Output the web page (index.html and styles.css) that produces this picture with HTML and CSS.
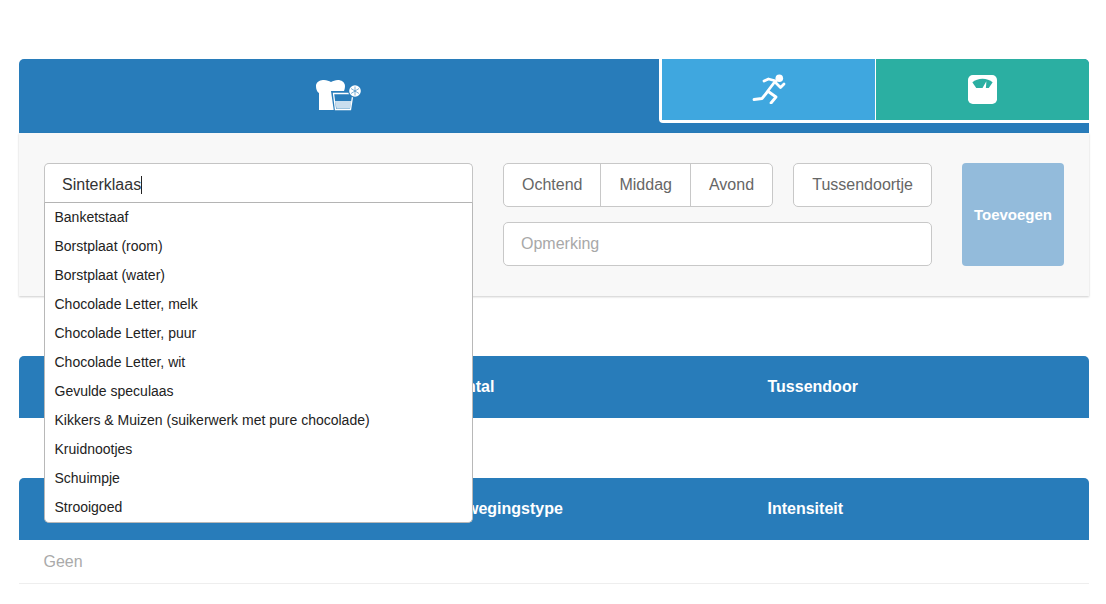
FILE: index.html
```html
<!DOCTYPE html>
<html lang="nl">
<head>
    <meta charset="UTF-8">
    <meta name="viewport" content="width=device-width, initial-scale=1.0">
    <title>Dagboek</title>
    <link rel="stylesheet" href="styles.css">
</head>
<body>

    <div class="page">

        <!-- Tabs -->
        <div class="tabs">
            <div class="tab tab-food">
                <svg width="46" height="33" viewBox="0 0 46 33">
                    <path fill="#fff" d="M3 31V14C0 12 0 8 0 6 1 2 5 1 8 1 11 1 13 2 15 3 17 2 19 1 22 1 25 1 29 3 29 7 29 10 28 12 27 14V31Z"/>
                    <path fill="#287cba" d="M15 12H39L36 33H18Z"/>
                    <path fill="none" stroke="#fff" stroke-width="1.3" d="M17.500 14.500H37L34.500 30.500H19.500Z"/>
                    <path fill="#fff" opacity=".75" d="M19 22H35.500L34 29.500H20.500Z"/>
                    <circle cx="39" cy="12" r="6.800" fill="#287cba"/>
                    <circle cx="39" cy="12" r="5.800" fill="#fff"/>
                    <path stroke="#287cba" stroke-width=".6" d="M39 7.500V16.500M35 9.500 43 14.500M43 9.500 35 14.500"/>
                </svg>
            </div>
            <div class="tab-group">
                <div class="tab tab-run">
                    <svg class="icon-run" width="36" height="32" viewBox="0 0 36 32">
                        <circle cx="28.300" cy="6.300" r="3.800" fill="#fff"/>
                        <g fill="none" stroke="#fff" stroke-width="2.800" stroke-linecap="round" stroke-linejoin="round">
                            <path d="M24 9.500 16 20"/>
                            <path d="M25 9 17.500 7 13 9"/>
                            <path d="M25 11 29.500 15.500 33 12"/>
                            <path d="M18 20 25 25 20 31"/>
                            <path d="M15.500 21 11 26.500 3 27.500"/>
                        </g>
                    </svg>
                </div>
                <div class="tab tab-weight">
                    <svg width="29" height="29" viewBox="0 0 30 30">
                        <rect width="30" height="30" rx="5" fill="#fff"/>
                        <path fill="#2bafa2" d="M4.500 7.500C10 2.500 20 2.500 25.500 7.500L21.500 13.500H8.500Z"/>
                        <path fill="#fff" d="M15 13.500 19 6.500 18.500 13.500Z"/>
                    </svg>
                </div>
            </div>
        </div>

        <!-- Invoer -->
        <div class="panel">
            <div class="search">
                <div class="search-input">Sinterklaas<span class="caret"></span></div>
                <ul class="suggestions">
                    <li>Banketstaaf</li>
                    <li>Borstplaat (room)</li>
                    <li>Borstplaat (water)</li>
                    <li>Chocolade Letter, melk</li>
                    <li>Chocolade Letter, puur</li>
                    <li>Chocolade Letter, wit</li>
                    <li>Gevulde speculaas</li>
                    <li>Kikkers &amp; Muizen (suikerwerk met pure chocolade)</li>
                    <li>Kruidnootjes</li>
                    <li>Schuimpje</li>
                    <li>Strooigoed</li>
                </ul>
            </div>
            <div class="fields">
                <div class="moments">
                    <div class="btn-group">
                        <button>Ochtend</button>
                        <button>Middag</button>
                        <button>Avond</button>
                    </div>
                    <button class="btn-single">Tussendoortje</button>
                </div>
                <input class="note" type="text" placeholder="Opmerking">
            </div>
            <button class="btn-add">Toevoegen</button>
        </div>

        <!-- Voeding -->
        <div class="table">
            <div class="table-head">
                <div></div>
                <div>Aantal</div>
                <div>Tussendoor</div>
            </div>
        </div>

        <!-- Beweging -->
        <div class="table">
            <div class="table-head">
                <div></div>
                <div>Bewegingstype</div>
                <div>Intensiteit</div>
            </div>
            <div class="table-row">Geen</div>
        </div>

    </div>

</body>
</html>
```

FILE: styles.css
```css
body {
    margin: 0;
    padding: 0;
    font-family: "Liberation Sans", Arial, sans-serif;
    font-size: 16px;
    background-color: #fff;
    color: #333;
}

.page {
    padding: 59px 17px 0 19px;
}

/* Tabs */
.tabs {
    display: flex;
    height: 74px;
    background-color: #287cba;
    border-radius: 5px 5px 0 0;
}

.tab {
    display: flex;
    align-items: center;
    justify-content: center;
}

.tab-food {
    flex: 1;
    padding-bottom: 1px;
}

.tab-group {
    display: flex;
    width: 430px;
    height: 64px;
    border-left: 3px solid #fff;
    border-bottom: 3px solid #fff;
    border-bottom-left-radius: 4px;
    box-sizing: border-box;
    overflow: hidden;
}

.tab-run {
    width: 213px;
    background-color: #3fa7df;
    border-right: 1px solid #fff;
}

.icon-run {
    margin-bottom: 3px;
}

.tab-weight {
    flex: 1;
    background-color: #2bafa2;
    border-top-right-radius: 5px;
}

/* Invoer */
.panel {
    display: flex;
    height: 163px;
    padding: 30px 25px;
    box-sizing: border-box;
    background-color: #f8f8f8;
    box-shadow: 0 1px 2px rgba(0, 0, 0, 0.2);
}

.search {
    position: relative;
    width: 429px;
    margin-right: 30px;
}

.search-input {
    height: 40px;
    line-height: 41px;
    padding-left: 17px;
    box-sizing: border-box;
    background-color: #fff;
    border: 1px solid #c4c4c4;
    border-bottom-color: #b4b4b4;
    border-radius: 5px 5px 0 0;
    color: #333;
}

.caret {
    display: inline-block;
    width: 1px;
    height: 18px;
    background-color: #222;
    vertical-align: -4px;
}

/* Lijst ligt over de tabellen heen */
.suggestions {
    position: absolute;
    top: 40px;
    left: 0;
    right: 0;
    z-index: 2;
    margin: 0;
    padding: 0;
    list-style: none;
    box-sizing: border-box;
    height: 320px;
    background-color: #fff;
    border: 1px solid #b8b8b8;
    border-top: none;
    border-radius: 0 0 5px 5px;
}

.suggestions li {
    height: 29px;
    line-height: 29px;
    padding-left: 9.5px;
    font-size: 14px;
    color: #222;
}

.fields {
    width: 429px;
}

.moments {
    display: flex;
    justify-content: space-between;
    margin-bottom: 15px;
}

.btn-group {
    display: flex;
    height: 44px;
    box-sizing: border-box;
    background-color: #fff;
    border: 1px solid #c8c8c8;
    border-radius: 5px;
}

.btn-group button,
.btn-single {
    height: 44px;
    padding: 0 18px;
    font-family: inherit;
    font-size: 16px;
    color: #666;
    background-color: #fff;
    border: none;
}

.btn-group button {
    height: 42px;
    background: none;
    border-left: 1px solid #c8c8c8;
}

.btn-group button:first-child {
    border-left: none;
}

.btn-single {
    border: 1px solid #c8c8c8;
    border-radius: 5px;
}

.note {
    display: block;
    width: 100%;
    height: 44px;
    padding: 0 17px;
    box-sizing: border-box;
    font-family: inherit;
    font-size: 16px;
    background-color: #fff;
    border: 1px solid #c8c8c8;
    border-radius: 5px;
}

.note::placeholder {
    color: #a8a8a8;
}

.btn-add {
    width: 102px;
    height: 103px;
    margin-left: 30px;
    padding: 0;
    font-family: inherit;
    font-size: 15px;
    font-weight: bold;
    color: #fff;
    background-color: #93bbdb;
    border: none;
    border-radius: 4px;
}

/* Tabellen */
.table {
    margin-top: 60px;
}

.table-head {
    display: grid;
    grid-template-columns: 402px 322px 1fr;
    height: 62px;
    padding: 0 24.5px;
    align-items: center;
    font-weight: bold;
    color: #fff;
    background-color: #287cba;
    border-radius: 5px 5px 0 0;
}

.table-row {
    height: 44px;
    line-height: 43px;
    padding-left: 24.5px;
    box-sizing: border-box;
    color: #aaa;
    border-bottom: 1px solid #eee;
}
```
